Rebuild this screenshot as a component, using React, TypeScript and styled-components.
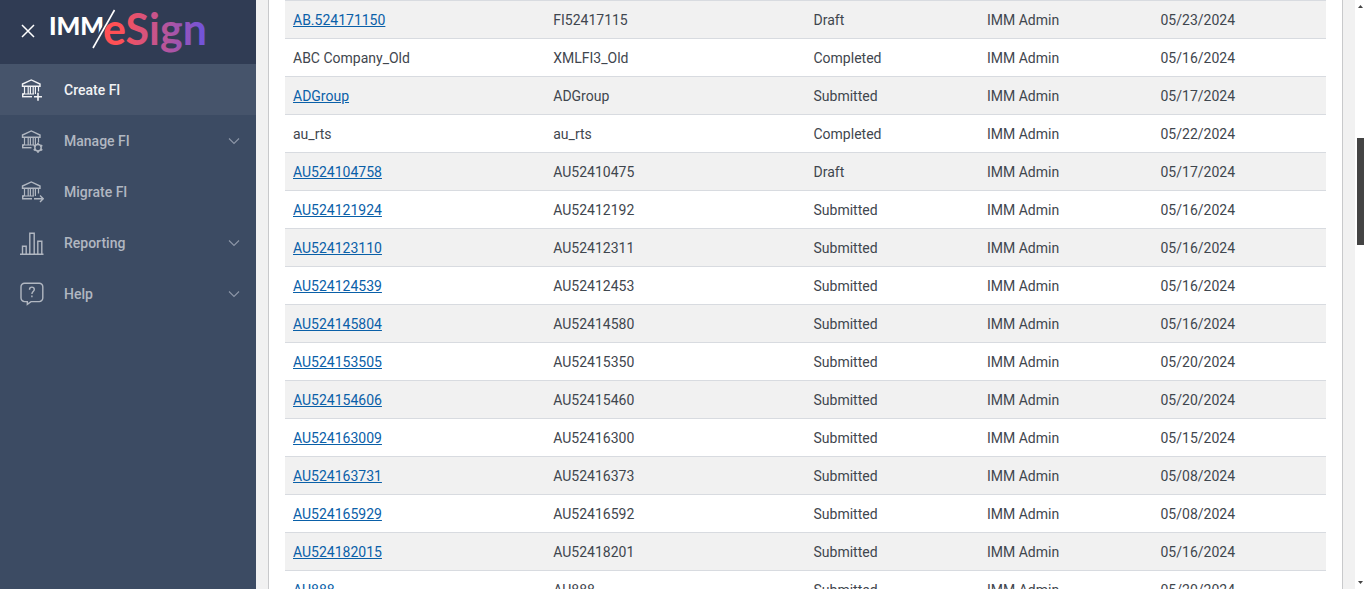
import React from 'react';
import styled, { createGlobalStyle } from 'styled-components';

const GlobalStyle = createGlobalStyle`
  *, *::before, *::after { box-sizing: border-box; }
  body {
    margin: 0;
    overflow: hidden;
    font-family: Roboto, "Liberation Sans", sans-serif;
    font-size: 14px;
    color: #3f464e;
    background: #f1f1f1;
  }
`;

const Shell = styled.div`
  display: grid;
  grid-template-columns: 256px minmax(0, 1fr) 11px;
  height: 100vh;
  overflow: hidden;
`;

const Sidebar = styled.aside`
  background: #3c4b63;
`;

const Brand = styled.header`
  display: flex;
  align-items: flex-start;
  height: 64px;
  padding-left: 20px;
  background: #303c54;
`;

const CloseButton = styled.button`
  display: flex;
  align-items: center;
  justify-content: center;
  width: 16px;
  height: 62px;
  padding: 0;
  border: 0;
  background: none;
  cursor: pointer;
`;

const Logo = styled.svg`
  display: block;
  margin-left: 12px;
`;

const NavButton = styled.button<{ $active?: boolean }>`
  display: flex;
  align-items: center;
  width: 100%;
  height: 51px;
  padding: 0 16px 0 20px;
  border: 0;
  font: 500 14px/20px Roboto, "Liberation Sans", sans-serif;
  text-align: left;
  color: ${({ $active }) => ($active ? '#f1f2f4' : '#b1b7c1')};
  background: ${({ $active }) => ($active ? '#46546b' : 'transparent')};
  cursor: pointer;
`;

const NavLabel = styled.span`
  flex: 1;
  margin-left: 20px;
`;

const Content = styled.main`
  padding: 0 12px;
  overflow: hidden;
  background: #f1f1f1;
`;

const Panel = styled.section`
  min-height: 100%;
  padding: 0 16px;
  border: solid #c8c9cb;
  border-width: 0 1px;
  background: #ffffff;
`;

const Table = styled.table`
  width: 100%;
  table-layout: fixed;
  border-collapse: separate;
  border-spacing: 0;
`;

const Col = styled.col<{ $share: number }>`
  width: ${({ $share }) => `calc(100% * ${$share} / 12)`};
`;

const Row = styled.tr`
  &:nth-child(odd) { background: #f1f1f1; }
`;

const Cell = styled.td`
  height: 38px;
  padding: 0 8px;
  border-top: 1px solid #d8dbe0;
  line-height: 20px;
`;

const FiLink = styled.a`
  color: #0a60a8;
  text-decoration: underline;
`;

const Scrollbar = styled.div`
  display: flex;
  flex-direction: column;
  align-items: center;
  padding: 5px 0;
  background: #ffffff;
`;

const Gap = styled.div<{ $grow: number }>`
  flex: ${({ $grow }) => $grow} 0 0;
`;

const Thumb = styled.div`
  flex: 107 0 0;
  width: 7px;
  background: #444444;
`;

const Bank = () => (
  <>
    <path d="M2.500 6v2.300h17.500V6L11.300 1.900z" />
    <path d="M4.500 8.500v7.500M8.200 8.500v7.500M10.400 8.500v7.500M13.200 8.500v7.500M15.400 8.500v7.500M18.500 8.500v5M3 16h11" strokeWidth="1.200" />
    <path d="M4 16H2.700v3" />
  </>
);

const icons: Record<string, React.ReactNode> = {
  create: (
    <>
      <Bank />
      <path d="M2 18.700h10" />
      <path d="M18 14.700v8M14 18.700h8" strokeWidth="1.600" />
    </>
  ),
  manage: (
    <>
      <Bank />
      <path d="M2 18.700h9.500" />
      <circle cx="18" cy="18.700" r="3.200" strokeWidth="1.500" />
      <path d="M18 13.700v2M18 21.700v2M13.700 16.200l1.700 1M20.600 20.200l1.700 1M13.700 21.200l1.700-1M20.600 17.200l1.700-1" strokeWidth="1.800" />
    </>
  ),
  migrate: (
    <>
      <Bank />
      <path d="M2 18.700h10M14 18.700h9M20 15.500l3.200 3.200-3.200 3.200" />
    </>
  ),
  reporting: <path d="M0 23.300h23.500M2.500 23v-7.700h3.700V23M9.800 23V2.200h4.400V23M17.800 23V10.200h4V23" />,
  help: (
    <>
      <path d="M4.500 1.300h14.800a3.500 3.500 0 0 1 3.500 3.500v11.300a3.500 3.500 0 0 1-3.500 3.500H11l-3.700 2.700v-2.700H4.500A3.500 3.500 0 0 1 1 16.100V4.800a3.500 3.500 0 0 1 3.500-3.500z" />
      <path d="M9.500 7.700c0-1.700 1-2.600 2.400-2.600s2.400.9 2.400 2.400c0 2-2.400 2.100-2.400 4.400M11.900 13.600v1.700" />
    </>
  ),
};

const NavIcon = ({ name }: { name: string }) => (
  <svg width="24" height="24" viewBox="0 0 24 24" fill="none" stroke="currentColor" strokeWidth="1.400" aria-hidden="true">
    {icons[name]}
  </svg>
);

const Chevron = () => (
  <svg width="12" height="8" viewBox="0 0 12 8" fill="none" stroke="#8d97a8" strokeWidth="1.100" aria-hidden="true">
    <path d="M1 1.500l5 5 5-5" />
  </svg>
);

const navItems = [
  { label: 'Create FI', icon: 'create', active: true },
  { label: 'Manage FI', icon: 'manage', expands: true },
  { label: 'Migrate FI', icon: 'migrate' },
  { label: 'Reporting', icon: 'reporting', expands: true },
  { label: 'Help', icon: 'help', expands: true },
];

type Institution = [name: string, id: string, status: string, date: string];

const institutions: Institution[] = [
  ['AB.524171150', 'FI52417115', 'Draft', '05/23/2024'],
  ['ABC Company_Old', 'XMLFI3_Old', 'Completed', '05/16/2024'],
  ['ADGroup', 'ADGroup', 'Submitted', '05/17/2024'],
  ['au_rts', 'au_rts', 'Completed', '05/22/2024'],
  ['AU524104758', 'AU52410475', 'Draft', '05/17/2024'],
  ['AU524121924', 'AU52412192', 'Submitted', '05/16/2024'],
  ['AU524123110', 'AU52412311', 'Submitted', '05/16/2024'],
  ['AU524124539', 'AU52412453', 'Submitted', '05/16/2024'],
  ['AU524145804', 'AU52414580', 'Submitted', '05/16/2024'],
  ['AU524153505', 'AU52415350', 'Submitted', '05/20/2024'],
  ['AU524154606', 'AU52415460', 'Submitted', '05/20/2024'],
  ['AU524163009', 'AU52416300', 'Submitted', '05/15/2024'],
  ['AU524163731', 'AU52416373', 'Submitted', '05/08/2024'],
  ['AU524165929', 'AU52416592', 'Submitted', '05/08/2024'],
  ['AU524182015', 'AU52418201', 'Submitted', '05/16/2024'],
  ['AU888', 'AU888', 'Submitted', '05/20/2024'],
];

export default function App() {
  return (
    <>
      <GlobalStyle />
      <Shell>
        <Sidebar>
          <Brand>
            <CloseButton aria-label="Close menu">
              <svg width="16" height="16" viewBox="0 0 16 16" stroke="#ffffff" strokeWidth="1.500">
                <path d="M2 2l12 12M14 2L2 14" />
              </svg>
            </CloseButton>
            <Logo width="164" height="60" viewBox="48 0 164 60" role="img" aria-label="IMM/eSign">
              <defs>
                <linearGradient id="brand" gradientUnits="userSpaceOnUse" x1="104" y1="0" x2="205" y2="0">
                  <stop offset="0.150" stopColor="#ff5055" />
                  <stop offset="0.600" stopColor="#b8559a" />
                  <stop offset="1" stopColor="#6e54dc" />
                </linearGradient>
              </defs>
              <text x="49" y="35" fill="#ffffff" fontFamily="Lato, sans-serif" fontWeight="900" fontSize="25">IMM</text>
              <path d="M93 48L114.500 10" stroke="#303c54" strokeWidth="5" />
              <path d="M93 48L114.500 10" stroke="#ffffff" strokeWidth="1.600" />
              <text x="103" y="45" fill="url(#brand)" fontFamily="Lato, sans-serif" fontWeight="700" fontSize="43">eSign</text>
            </Logo>
          </Brand>
          <nav aria-label="Main">
            {navItems.map((item) => (
              <NavButton key={item.label} $active={item.active}>
                <NavIcon name={item.icon} />
                <NavLabel>{item.label}</NavLabel>
                {item.expands && <Chevron />}
              </NavButton>
            ))}
          </nav>
        </Sidebar>
        <Content>
          <Panel>
            <Table aria-label="Financial institutions">
              <colgroup>
                <Col $share={3} />
                <Col $share={3} />
                <Col $share={2} />
                <Col $share={2} />
                <Col $share={2} />
              </colgroup>
              <tbody>
                {institutions.map(([name, id, status, date]) => (
                  <Row key={name}>
                    <Cell>{status === 'Completed' ? name : <FiLink href="#">{name}</FiLink>}</Cell>
                    <Cell>{id}</Cell>
                    <Cell>{status}</Cell>
                    <Cell>IMM Admin</Cell>
                    <Cell>{date}</Cell>
                  </Row>
                ))}
              </tbody>
            </Table>
          </Panel>
        </Content>
        <Scrollbar aria-hidden="true">
          <svg width="5" height="3" viewBox="0 0 5 3"><path d="M0 3L2.500 0 5 3z" fill="#444444" /></svg>
          <Gap $grow={130} />
          <Thumb />
          <Gap $grow={336} />
          <svg width="5" height="3" viewBox="0 0 5 3"><path d="M0 0L2.500 3 5 0z" fill="#444444" /></svg>
        </Scrollbar>
      </Shell>
    </>
  );
}
